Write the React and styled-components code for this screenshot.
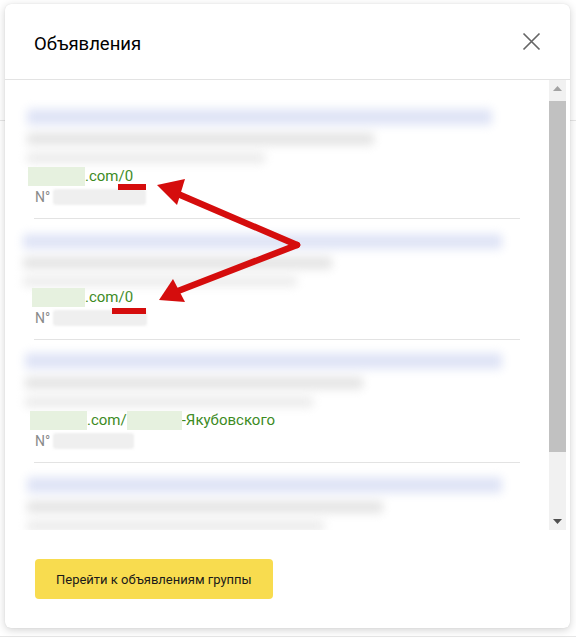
import React from 'react'
import styled, { createGlobalStyle } from 'styled-components'

const Global = createGlobalStyle`
  html, body { margin: 0; padding: 0; background: #fff; }
  body { font-family: Roboto, "Noto Sans", Arial, sans-serif; }
`

const Page = styled.div`
  position: relative;
  width: 576px;
  height: 640px;
  padding: 4px 6px 0 5px;
  box-sizing: border-box;
  background:
    linear-gradient(#e6e6e6, #e6e6e6) 0 120px / 576px 1px no-repeat,
    linear-gradient(#e6e6e6, #e6e6e6) 0 636px / 576px 1px no-repeat,
    #fff;
  overflow: hidden;
`

const Modal = styled.div`
  position: relative;
  width: 565px;
  height: 624px;
  background: #fff;
  border-radius: 6px;
  box-shadow: 0 2px 8px rgba(0, 0, 0, 0.18), 0 0 1px rgba(0, 0, 0, 0.12);
  display: flex;
  flex-direction: column;
  overflow: hidden;
`

const Header = styled.div`
  height: 75px;
  flex: none;
  display: flex;
  align-items: center;
  justify-content: space-between;
  padding: 0 27px 0 29px;
  border-bottom: 1px solid #e3e3e3;
`

const Title = styled.h2`
  margin: 0;
  font-size: 18.5px;
  font-weight: 400;
  color: #000;
  padding-top: 4px;
`

const Close = styled.button`
  border: none;
  background: none;
  padding: 0;
  width: 24px;
  height: 24px;
  display: flex;
  align-items: center;
  justify-content: center;
  cursor: pointer;
`

const Body = styled.div`
  height: 450px;
  flex: none;
  display: flex;
`

const List = styled.div`
  flex: 1;
  overflow: hidden;
  padding: 23px 27px 0 18px;
`

const Item = styled.div`
  margin-bottom: ${p => p.$gap}px;
`

const Blur = styled.div`
  height: ${p => p.$h}px;
  box-sizing: border-box;
  margin-left: ${p => p.$inset}px;
  filter: blur(5px);
  display: flex;
  flex-direction: column;
  gap: 8px;
  padding: 6px 0 0;
`

const BlurLine = styled.div`
  height: ${p => p.$h}px;
  width: ${p => p.$w}%;
  background: ${p => p.$c};
  border-radius: 2px;
`

const LinkRow = styled.div`
  display: flex;
  align-items: center;
  height: 22px;
  font-size: 15px;
  color: #3d8b1f;
  margin-left: ${p => p.$inset}px;
`

const GreenMask = styled.span`
  display: inline-block;
  width: ${p => p.$w}px;
  height: 19px;
  background: #e6f1df;
  filter: blur(0.6px);
`

const NumRow = styled.div`
  display: flex;
  align-items: center;
  height: 20px;
  font-size: 14px;
  color: #8a8a8a;
  margin-left: 12px;
  gap: 3px;
`

const GrayMask = styled.span`
  display: inline-block;
  width: ${p => p.$w}px;
  height: 16px;
  border-radius: 3px;
  background: #efefef;
  filter: blur(1px);
`

const Divider = styled.div`
  height: 1px;
  background: #e3e3e3;
  margin: 11px 2px 0 11px;
`

const Scrollbar = styled.div`
  width: 17px;
  margin: 0 4px 0 0;
  background: #f1f1f1;
  display: flex;
  flex-direction: column;
  align-items: center;
`

const ArrowBtn = styled.div`
  height: 17px;
  width: 17px;
  display: flex;
  align-items: center;
  justify-content: center;
  flex: none;
`

const Thumb = styled.div`
  width: 17px;
  height: 351px;
  margin-top: 4px;
  background: #c1c1c1;
`

const Track = styled.div`
  flex: 1;
`

const Footer = styled.div`
  flex: 1;
  padding: 29px 30px 0;
`

const Button = styled.button`
  height: 40px;
  padding: 0 21px;
  border: none;
  border-radius: 4px;
  background: #f8dc4f;
  font-family: Roboto, "Noto Sans", Arial, sans-serif;
  font-size: 13px;
  color: #1a1a1a;
  cursor: pointer;
`

const Annot = styled.svg`
  position: absolute;
  left: 0;
  top: 0;
  pointer-events: none;
`

const items = [
  { inset: 5, blur: 4, h: 62, title: [94, 70, 48], link: [57], gap: 9, num: 93 },
  { inset: 9, blur: 0, h: 58, title: [96, 62, 55], link: [53], gap: 7, num: 94 },
  { inset: 7, blur: 2, h: 62, title: [96, 68, 58], link: [57, 55, '-Якубовского'], gap: 8, num: 81 },
  { inset: 5, blur: 4, h: 62, title: [96, 72, 60], last: true }
]

function Entry({ d }) {
  return (
    <Item $gap={d.gap || 0}>
      <Blur $inset={d.blur} $h={d.h}>
        <BlurLine $h={16} $w={d.title[0]} $c="#dfe4f6" />
        <BlurLine $h={12} $w={d.title[1]} $c="#e4e4e4" />
        <BlurLine $h={10} $w={d.title[2]} $c="#eaeaea" />
      </Blur>
      {!d.last && (
        <>
          <LinkRow $inset={d.inset}>
            <GreenMask $w={d.link[0]} />
            <span>.com/{d.link.length > 1 ? '' : '0'}</span>
            {d.link.length > 1 && (
              <>
                <GreenMask $w={d.link[1]} />
                <span>{d.link[2]}</span>
              </>
            )}
          </LinkRow>
          <NumRow>
            <span>N°</span>
            <GrayMask $w={d.num} />
          </NumRow>
          <Divider />
        </>
      )}
    </Item>
  )
}

export default function App() {
  return (
    <Page>
      <Global />
      <Modal>
        <Header>
          <Title>Объявления</Title>
          <Close aria-label="Закрыть">
            <svg width="19" height="19" viewBox="0 0 19 19">
              <path d="M1.5 1.5 L17.5 17.5 M17.5 1.5 L1.5 17.5" stroke="#666" strokeWidth="1.7" fill="none" />
            </svg>
          </Close>
        </Header>
        <Body>
          <List>
            {items.map((d, i) => (
              <Entry key={i} d={d} />
            ))}
          </List>
          <Scrollbar>
            <ArrowBtn>
              <svg width="9" height="5" viewBox="0 0 9 5"><path d="M0 5 L4.5 0 L9 5 Z" fill="#a3a3a3" /></svg>
            </ArrowBtn>
            <Thumb />
            <Track />
            <ArrowBtn>
              <svg width="9" height="5" viewBox="0 0 9 5"><path d="M0 0 L9 0 L4.5 5 Z" fill="#505050" /></svg>
            </ArrowBtn>
          </Scrollbar>
        </Body>
        <Footer>
          <Button>Перейти к объявлениям группы</Button>
        </Footer>
      </Modal>
      <Annot width="576" height="640" viewBox="0 0 576 640">
        <g fill="#d50d0d" stroke="#d50d0d">
          <line x1="297" y1="245" x2="178" y2="194" strokeWidth="6.5" strokeLinecap="round" />
          <line x1="297" y1="245" x2="178" y2="291" strokeWidth="6.5" strokeLinecap="round" />
          <polygon points="157,185 185,179 177,205" stroke="none" />
          <polygon points="159,300 173,279 185,302" stroke="none" />
          <rect x="118" y="184" width="28" height="6" stroke="none" />
          <rect x="112" y="308" width="34" height="6" stroke="none" />
        </g>
      </Annot>
    </Page>
  )
}
